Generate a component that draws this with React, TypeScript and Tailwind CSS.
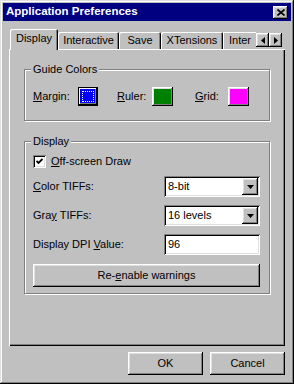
import React from "react";

const raised =
  "shadow-[inset_-1px_-1px_#000,inset_1px_1px_#fff,inset_-2px_-2px_#808080,inset_2px_2px_#dfdfdf]";
const sunken =
  "shadow-[inset_1px_1px_#808080,inset_-1px_-1px_#fff,inset_2px_2px_#000,inset_-2px_-2px_#dfdfdf]";

function Tab({ label, w, selected }: { label: string; w: string; selected?: boolean }) {
  if (selected) {
    return (
      <div
        className={`${w} h-[21px] -mb-[1px] relative z-10 bg-[#c0c0c0] flex items-center justify-center pb-[2px] rounded-tl-[2px] rounded-tr-[2px] shadow-[inset_1px_1px_#fff,inset_-1px_0_#000,inset_-2px_0_#808080]`}
      >
        {label}
      </div>
    );
  }
  return (
    <div
      className={`${w} h-[17px] shrink-0 bg-[#c0c0c0] flex items-center justify-center whitespace-nowrap rounded-tl-[2px] rounded-tr-[2px] shadow-[inset_1px_1px_#fff,inset_-1px_0_#000,inset_-2px_0_#808080]`}
    >
      {label}
    </div>
  );
}

function Arrow({ dir }: { dir: "left" | "right" | "down" }) {
  if (dir === "down")
    return (
      <svg width="7" height="4" viewBox="0 0 7 4">
        <path d="M0 0H7L3.5 4Z" fill="#000" />
      </svg>
    );
  return (
    <svg width="4" height="7" viewBox="0 0 4 7">
      {dir === "left" ? <path d="M4 0V7L0 3.5Z" fill="#000" /> : <path d="M0 0V7L4 3.5Z" fill="#000" />}
    </svg>
  );
}

function Swatch({ color, focused }: { color: string; focused?: boolean }) {
  if (focused) {
    return (
      <div className="w-[20px] h-[19px] border border-black">
        <div className={`w-full h-full p-[3px] ${color} shadow-[inset_-1px_-1px_#000,inset_1px_1px_#fff,inset_-2px_-2px_#808080]`}>
          <div className="w-full h-full border border-dotted border-white" />
        </div>
      </div>
    );
  }
  return (
    <div
      className={`w-[21px] h-[19px] ${color} shadow-[inset_-1px_-1px_#000,inset_1px_1px_#fff,inset_-2px_-2px_#808080,inset_2px_2px_#dfdfdf]`}
    />
  );
}

function Select({ value }: { value: string }) {
  return (
    <div className={`w-[96px] h-[21px] bg-white ${sunken} flex items-center pl-[4px] pr-[2px]`}>
      <span className="flex-1">{value}</span>
      <div className={`w-[16px] h-[17px] bg-[#c0c0c0] ${raised} flex items-center justify-center`}>
        <Arrow dir="down" />
      </div>
    </div>
  );
}

function Group({
  title,
  className,
  children,
}: {
  title: string;
  className: string;
  children: React.ReactNode;
}) {
  return (
    <div
      className={`relative border border-[#808080] shadow-[1px_1px_0_#fff,inset_1px_1px_0_#fff] ${className}`}
    >
      <span className="absolute left-[6px] -top-[8px] bg-[#c0c0c0] px-[2px] leading-[14px]">{title}</span>
      {children}
    </div>
  );
}

export default function App() {
  return (
    <div className="w-[294px] h-[384px] bg-[#c0c0c0] p-[3px] flex flex-col text-[11px] text-black font-['Liberation_Sans',Arial,sans-serif] shadow-[inset_-1px_-1px_#000,inset_1px_1px_#dfdfdf,inset_-2px_-2px_#808080,inset_2px_2px_#fff]">
      {/* Title bar */}
      <div className="h-[18px] bg-[#000080] flex items-center pl-[3px] pr-[3px]">
        <span className="flex-1 text-white font-bold text-[11.5px] leading-none">Application Preferences</span>
        <div className={`w-[15px] h-[13px] bg-[#c0c0c0] ${raised} flex items-center justify-center`}>
          <svg width="8" height="7" viewBox="0 0 8 7">
            <path d="M0.5 0.5L7.5 6.5M7.5 0.5L0.5 6.5" stroke="#000" strokeWidth="1.6" />
          </svg>
        </div>
      </div>

      <div className="flex-1 flex flex-col px-[6px]">
        {/* Tabs */}
        <div className="relative mt-[8px] h-[20px] flex items-end pl-[1px]">
          <Tab label="Display" w="w-[48px]" selected />
          <Tab label="Interactive" w="w-[61px]" />
          <Tab label="Save" w="w-[42px]" />
          <Tab label="XTensions" w="w-[62px]" />
          <div className="w-[33px] h-[17px] shrink-0 bg-[#c0c0c0] flex items-center pl-[6px] whitespace-nowrap shadow-[inset_1px_1px_#fff]">
            Inter
          </div>
          <div className="absolute left-[247px] top-[4px] flex bg-[#c0c0c0]">
            <div className={`w-[13px] h-[14px] ${raised} flex items-center justify-center`}>
              <Arrow dir="left" />
            </div>
            <div className={`w-[13px] h-[14px] ${raised} flex items-center justify-center`}>
              <Arrow dir="right" />
            </div>
          </div>
        </div>

        {/* Panel */}
        <div className="h-[297px] px-[15px] pt-[20px] shadow-[inset_1px_1px_#fff,inset_-1px_-1px_#000,inset_-2px_-2px_#808080]">
          <Group title="Guide Colors" className="h-[52px] pt-[17px] pl-[8px]">
            <div className="flex items-center">
              <span className="w-[45px]">
                <u>M</u>argin:
              </span>
              <Swatch color="bg-[#0000ff]" focused />
              <span className="w-[35px] ml-[19px]">
                <u>R</u>uler:
              </span>
              <Swatch color="bg-[#008000]" />
              <span className="w-[33px] ml-[22px]">
                <u>G</u>rid:
              </span>
              <Swatch color="bg-[#ff00ff]" />
            </div>
          </Group>

          <Group title="Display" className="h-[153px] mt-[20px] pt-[13px] pl-[8px] pr-[9px]">
            <div className="flex items-center h-[13px]">
              <div className={`w-[13px] h-[13px] bg-white ${sunken} flex items-center justify-center`}>
                <svg width="7" height="7" viewBox="0 0 7 7">
                  <path d="M0.5 3L2.5 5L6.5 1" stroke="#000" strokeWidth="1.8" fill="none" />
                </svg>
              </div>
              <span className="ml-[5px]">
                <u>O</u>ff-screen Draw
              </span>
            </div>
            <div className="flex items-center justify-between mt-[8px]">
              <span>
                <u>C</u>olor TIFFs:
              </span>
              <Select value="8-bit" />
            </div>
            <div className="flex items-center justify-between mt-[8px]">
              <span>
                Gra<u>y</u> TIFFs:
              </span>
              <Select value="16 levels" />
            </div>
            <div className="flex items-center justify-between mt-[8px]">
              <span>
                Display DPI <u>V</u>alue:
              </span>
              <div className={`w-[96px] h-[21px] bg-white ${sunken} flex items-center pl-[4px]`}>96</div>
            </div>
            <div className={`mt-[9px] h-[23px] ${raised} flex items-center justify-center`}>
              <span>
                Re-<u>e</u>nable warnings
              </span>
            </div>
          </Group>
        </div>

        {/* Buttons */}
        <div className="mt-[6px] flex justify-end gap-[7px]">
          <div className={`w-[75px] h-[23px] ${raised} flex items-center justify-center`}>OK</div>
          <div className={`w-[75px] h-[23px] ${raised} flex items-center justify-center`}>Cancel</div>
        </div>
      </div>
    </div>
  );
}
